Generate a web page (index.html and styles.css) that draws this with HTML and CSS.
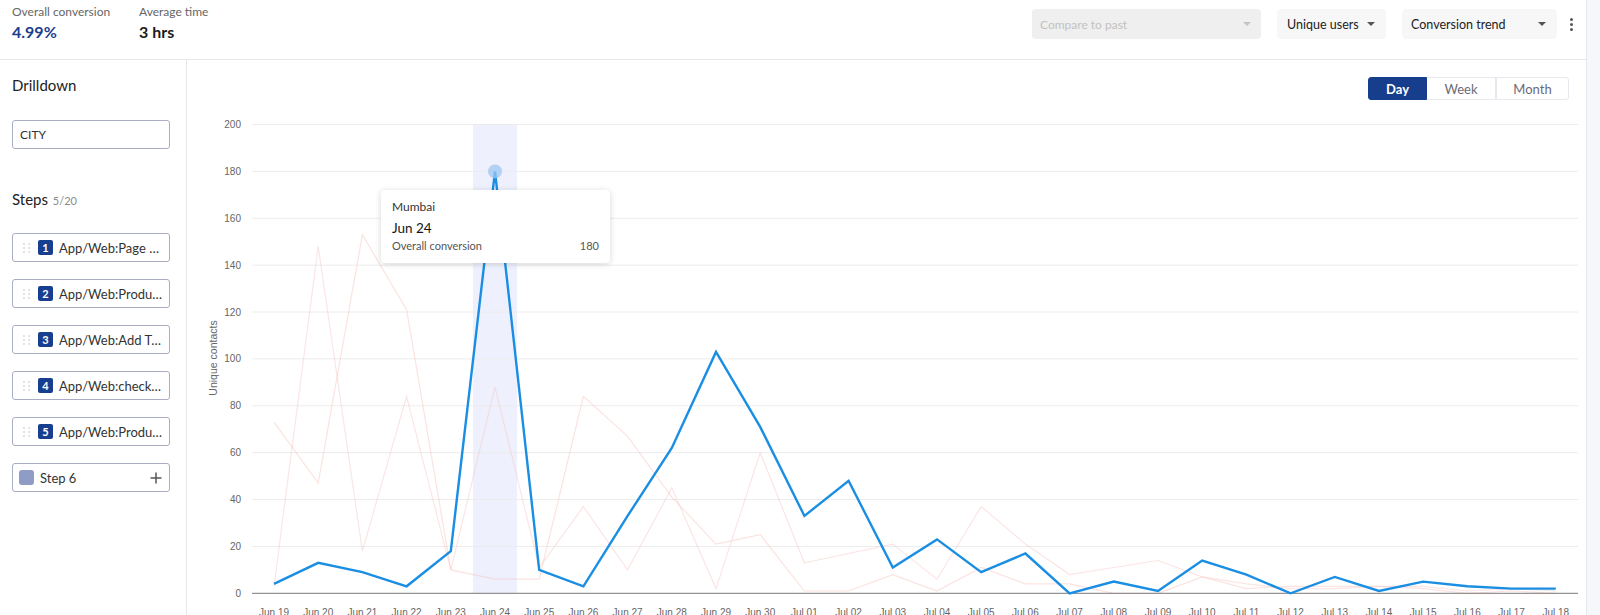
FILE: index.html
```html
<!DOCTYPE html>
<html lang="en">
<head>
<meta charset="utf-8">
<title>Conversion trend</title>
<link rel="stylesheet" href="styles.css">
</head>
<body>
<div class="app">
  <div class="main">
    <header class="topbar">
      <div class="stats">
        <div class="stat">
          <div class="stat-label">Overall conversion</div>
          <div class="stat-value blue">4.99%</div>
        </div>
        <div class="stat">
          <div class="stat-label">Average time</div>
          <div class="stat-value">3 hrs</div>
        </div>
      </div>
      <div class="controls">
        <div class="select select-compare"><span>Compare to past</span><span class="caret caret-light"></span></div>
        <div class="select select-users"><span>Unique users</span><span class="caret"></span></div>
        <div class="select select-trend"><span>Conversion trend</span><span class="caret"></span></div>
        <div class="kebab"><i></i><i></i><i></i></div>
      </div>
    </header>
    <div class="content">
      <aside class="sidebar">
        <div class="side-title">Drilldown</div>
        <div class="city">CITY</div>
        <div class="side-title steps-title">Steps <span class="count">5/20</span></div>
        <div class="step-list">
          <div class="step"><span class="handle"><i></i><i></i><i></i><i></i><i></i><i></i></span><span class="badge">1</span><span class="step-name">App/Web:Page …</span></div>
          <div class="step"><span class="handle"><i></i><i></i><i></i><i></i><i></i><i></i></span><span class="badge">2</span><span class="step-name">App/Web:Produ…</span></div>
          <div class="step"><span class="handle"><i></i><i></i><i></i><i></i><i></i><i></i></span><span class="badge">3</span><span class="step-name">App/Web:Add T…</span></div>
          <div class="step"><span class="handle"><i></i><i></i><i></i><i></i><i></i><i></i></span><span class="badge">4</span><span class="step-name">App/Web:check…</span></div>
          <div class="step"><span class="handle"><i></i><i></i><i></i><i></i><i></i><i></i></span><span class="badge">5</span><span class="step-name">App/Web:Produ…</span></div>
          <div class="step step-new"><span class="swatch"></span><span class="step-name new-name">Step 6</span>
            <svg class="plus" width="12" height="12" viewBox="0 0 12 12"><path d="M6 0.5V11.5M0.5 6H11.5" stroke="#555" stroke-width="1.5" fill="none"/></svg>
          </div>
        </div>
      </aside>
      <section class="chart-panel">
        <div class="toolbar">
          <div class="seg">
            <div class="seg-btn seg-day">Day</div>
            <div class="seg-btn seg-week">Week</div>
            <div class="seg-btn seg-month">Month</div>
          </div>
        </div>
        <div class="chart-wrap">
          <svg class="chart" width="1399" height="515" viewBox="0 0 1399 515">
            <rect class="band" x="285.9" y="24.5" width="44.2" height="468.8"/>
            <g class="grid">
              <line x1="65" x2="1391" y1="446.42" y2="446.42"/>
              <line x1="65" x2="1391" y1="399.54" y2="399.54"/>
              <line x1="65" x2="1391" y1="352.66" y2="352.66"/>
              <line x1="65" x2="1391" y1="305.78" y2="305.78"/>
              <line x1="65" x2="1391" y1="258.9" y2="258.9"/>
              <line x1="65" x2="1391" y1="212.02" y2="212.02"/>
              <line x1="65" x2="1391" y1="165.14" y2="165.14"/>
              <line x1="65" x2="1391" y1="118.26" y2="118.26"/>
              <line x1="65" x2="1391" y1="71.38" y2="71.38"/>
              <line x1="65" x2="1391" y1="24.5" y2="24.5"/>
            </g>
            <g class="ylabels">
              <text x="54" y="496.8">0</text>
              <text x="54" y="449.9">20</text>
              <text x="54" y="403">40</text>
              <text x="54" y="356.2">60</text>
              <text x="54" y="309.3">80</text>
              <text x="54" y="262.4">100</text>
              <text x="54" y="215.5">120</text>
              <text x="54" y="168.6">140</text>
              <text x="54" y="121.8">160</text>
              <text x="54" y="74.9">180</text>
              <text x="54" y="28">200</text>
            </g>
            <text class="ytitle" x="30" y="258" transform="rotate(-90 30 258)">Unique contacts</text>
            <polyline class="pink1" points="87,322.2 131.2,383.1 175.4,134.7 219.6,209.7 263.8,469.9 308,479.2 352.2,479.2 396.4,296.4 440.6,336.3 484.8,397.2 529,444.1 573.2,434.7 617.4,491 661.6,491 705.8,474.6 750,491 794.2,467.5 838.4,483.9 882.6,483.9 926.8,493.3 971,493.3 1015.2,476.9 1059.4,488.6 1103.6,486.3 1147.8,486.3 1192,486.3 1236.2,488.6 1280.4,493.3 1324.6,491 1368.8,493.3"/>
            <polyline class="pink2" points="87,486.3 131.2,146.4 175.4,451.1 219.6,296.4 263.8,469.9 308,287 352.2,467.5 396.4,406.6 440.6,469.9 484.8,387.8 529,488.6 573.2,352.7 617.4,462.8 661.6,453.5 705.8,444.1 750,479.2 794.2,406.6 838.4,444.1 882.6,474.6 926.8,467.5 971,460.5 1015.2,476.9 1059.4,483.9 1103.6,488.6 1147.8,488.6 1192,486.3 1236.2,486.3 1280.4,491 1324.6,488.6 1368.8,491"/>
            <line class="zero" x1="65" x2="1391" y1="493.3" y2="493.3"/>
            <polyline class="blue" points="87,483.9 131.2,462.8 175.4,472.2 219.6,486.3 263.8,451.1 308,71.4 352.2,469.9 396.4,486.3 440.6,415.9 484.8,348 529,251.9 573.2,326.9 617.4,415.9 661.6,380.8 705.8,467.5 750,439.4 794.2,472.2 838.4,453.5 882.6,493.3 926.8,481.6 971,491 1015.2,460.5 1059.4,474.6 1103.6,493.3 1147.8,476.9 1192,491 1236.2,481.6 1280.4,486.3 1324.6,488.6 1368.8,488.6"/>
            <circle class="marker" cx="308" cy="71.4" r="7"/>
            <g class="xlabels">
              <text x="87" y="516">Jun 19</text>
              <text x="131.2" y="516">Jun 20</text>
              <text x="175.4" y="516">Jun 21</text>
              <text x="219.6" y="516">Jun 22</text>
              <text x="263.8" y="516">Jun 23</text>
              <text x="308" y="516">Jun 24</text>
              <text x="352.2" y="516">Jun 25</text>
              <text x="396.4" y="516">Jun 26</text>
              <text x="440.6" y="516">Jun 27</text>
              <text x="484.8" y="516">Jun 28</text>
              <text x="529" y="516">Jun 29</text>
              <text x="573.2" y="516">Jun 30</text>
              <text x="617.4" y="516">Jul 01</text>
              <text x="661.6" y="516">Jul 02</text>
              <text x="705.8" y="516">Jul 03</text>
              <text x="750" y="516">Jul 04</text>
              <text x="794.2" y="516">Jul 05</text>
              <text x="838.4" y="516">Jul 06</text>
              <text x="882.6" y="516">Jul 07</text>
              <text x="926.8" y="516">Jul 08</text>
              <text x="971" y="516">Jul 09</text>
              <text x="1015.2" y="516">Jul 10</text>
              <text x="1059.4" y="516">Jul 11</text>
              <text x="1103.6" y="516">Jul 12</text>
              <text x="1147.8" y="516">Jul 13</text>
              <text x="1192" y="516">Jul 14</text>
              <text x="1236.2" y="516">Jul 15</text>
              <text x="1280.4" y="516">Jul 16</text>
              <text x="1324.6" y="516">Jul 17</text>
              <text x="1368.8" y="516">Jul 18</text>
            </g>
          </svg>
          <div class="tooltip">
            <div class="tt-city">Mumbai</div>
            <div class="tt-date">Jun 24</div>
            <div class="tt-row"><span>Overall conversion</span><span>180</span></div>
          </div>
        </div>
      </section>
    </div>
  </div>
  <div class="rail"></div>
</div>
</body>
</html>
```

FILE: styles.css
```css
html, body {
  margin: 0;
  height: 615px;
  overflow: hidden;
  background: #fff;
}
body {
  font-family: "Lato", "Noto Sans", sans-serif;
  color: #222;
}
.app {
  display: flex;
  height: 615px;
}
.main {
  width: 1586px;
  flex: none;
  display: flex;
  flex-direction: column;
}
.rail {
  flex: 1;
  background: #f6f7fb;
  border-left: 1px solid #e6e8ef;
}

/* top bar */
.topbar {
  height: 60px;
  box-sizing: border-box;
  border-bottom: 1px solid #e6e6e6;
  display: flex;
  justify-content: space-between;
  align-items: flex-start;
  flex: none;
}
.stats {
  display: flex;
  padding: 4px 0 0 12px;
}
.stat {
  width: 127px;
}
.stat-label {
  font-size: 12px;
  line-height: 16px;
  color: #666;
}
.stat-value {
  font-size: 16px;
  line-height: 20px;
  font-weight: 700;
  margin-top: 2px;
  color: #1b1b1b;
}
.stat-value.blue {
  color: #1c3d8e;
}
.controls {
  display: flex;
  align-items: center;
  padding: 9px 10px 0 0;
}
.select {
  height: 30px;
  box-sizing: border-box;
  border-radius: 4px;
  background: #f7f7f7;
  display: flex;
  align-items: center;
  justify-content: space-between;
  font-size: 12.5px;
  color: #222;
  margin-left: 16px;
}
.select-compare {
  width: 229px;
  padding: 0 10px 0 8px;
  background: #efefef;
  color: #c2c2c2;
  font-size: 12px;
}
.select-users {
  width: 109px;
  padding: 0 11px 0 10px;
}
.select-trend {
  width: 155px;
  padding: 0 11px 0 9px;
}
.caret {
  width: 0;
  height: 0;
  border-left: 4px solid transparent;
  border-right: 4px solid transparent;
  border-top: 4px solid #555;
}
.caret-light {
  border-top-color: #c4c4c4;
}
.kebab {
  margin-left: 9px;
  width: 10px;
  height: 30px;
  display: flex;
  flex-direction: column;
  align-items: center;
  justify-content: center;
  gap: 2px;
}
.kebab i {
  width: 3px;
  height: 3px;
  border-radius: 50%;
  background: #555;
}

/* content */
.content {
  flex: 1;
  display: flex;
  min-height: 0;
}
.sidebar {
  width: 187px;
  box-sizing: border-box;
  border-right: 1px solid #e6e6e6;
  padding: 15px 0 0 12px;
  flex: none;
}
.side-title {
  font-size: 15px;
  line-height: 20px;
  color: #222;
}
.city {
  margin-top: 25px;
  width: 158px;
  height: 29px;
  box-sizing: border-box;
  border: 1px solid #a9adc4;
  border-radius: 3px;
  font-size: 12px;
  padding-left: 7px;
  display: flex;
  align-items: center;
  color: #333;
}
.steps-title {
  margin-top: 40px;
}
.count {
  font-size: 11px;
  color: #8a8a8a;
  margin-left: 1px;
}
.step-list {
  margin-top: 22px;
  display: flex;
  flex-direction: column;
  gap: 17px;
}
.step {
  width: 158px;
  height: 29px;
  box-sizing: border-box;
  border: 1px solid #a9adc4;
  border-radius: 3px;
  display: flex;
  align-items: center;
  padding-left: 10px;
  font-size: 13px;
  color: #333;
}
.handle {
  display: grid;
  grid-template-columns: 2px 2px;
  column-gap: 3px;
  row-gap: 2px;
  width: 7px;
}
.handle i {
  width: 2px;
  height: 2px;
  background: #e2e2e2;
}
.badge {
  margin-left: 8px;
  width: 15px;
  height: 15px;
  border-radius: 2px;
  background: #183f8f;
  color: #fff;
  font-size: 11px;
  font-weight: 700;
  display: flex;
  align-items: center;
  justify-content: center;
}
.step-name {
  margin-left: 6px;
  white-space: nowrap;
}
.step-new {
  padding-left: 6px;
  padding-right: 7px;
}
.swatch {
  width: 15px;
  height: 15px;
  border-radius: 3px;
  background: #8e9cc6;
}
.plus {
  margin-left: auto;
}

/* chart panel */
.chart-panel {
  flex: 1;
  display: flex;
  flex-direction: column;
}
.toolbar {
  display: flex;
  justify-content: flex-end;
  padding: 17px 17px 0 0;
  height: 23px;
  flex: none;
}
.seg {
  display: flex;
}
.seg-btn {
  box-sizing: border-box;
  height: 23px;
  display: flex;
  align-items: center;
  justify-content: center;
  font-size: 13px;
  color: #6b6b78;
  border: 1px solid #e8e8ee;
  background: #fff;
}
.seg-day {
  width: 59px;
  background: #173e8c;
  border-color: #173e8c;
  color: #fff;
  font-weight: 700;
  border-radius: 3px 0 0 3px;
}
.seg-week {
  width: 69px;
  border-left: none;
}
.seg-month {
  width: 73px;
  border-left: 1px solid #e8e8ee;
  border-radius: 0 3px 3px 0;
}
.chart-wrap {
  position: relative;
  height: 515px;
}
.chart {
  display: block;
  overflow: visible;
  font-family: "Liberation Sans", Arial, sans-serif;
}
.band {
  fill: #eff0fd;
}
.grid line {
  stroke: #ececec;
  stroke-width: 1;
}
.zero {
  stroke: #7a7a7a;
  stroke-width: 1;
}
.ylabels text {
  font-size: 10px;
  fill: #666;
  text-anchor: end;
}
.xlabels text {
  font-size: 10px;
  fill: #666;
  text-anchor: middle;
}
.ytitle {
  font-size: 10.5px;
  fill: #666;
  text-anchor: middle;
}
.pink1 {
  fill: none;
  stroke: #f6c2ba;
  stroke-width: 1.2;
  opacity: 0.45;
}
.pink2 {
  fill: none;
  stroke: #f7c6c6;
  stroke-width: 1.2;
  opacity: 0.45;
}
.blue {
  fill: none;
  stroke: #1a8ee2;
  stroke-width: 2.4;
  stroke-linejoin: miter;
}
.marker {
  fill: #9cc6f0;
  opacity: 0.75;
}

/* tooltip */
.tooltip {
  position: absolute;
  left: 194px;
  top: 90px;
  width: 229px;
  height: 73px;
  box-sizing: border-box;
  background: #fff;
  border-radius: 4px;
  box-shadow: 0 1px 6px rgba(0, 0, 0, 0.16);
  padding: 9px 11px 0 11px;
}
.tt-city {
  font-size: 12px;
  line-height: 16px;
  color: #333;
}
.tt-date {
  margin-top: 4px;
  font-size: 13.5px;
  line-height: 18px;
  font-weight: 400;
  color: #151515;
}
.tt-row {
  margin-top: 2px;
  display: flex;
  justify-content: space-between;
  font-size: 11px;
  line-height: 14px;
  color: #555;
}
```
